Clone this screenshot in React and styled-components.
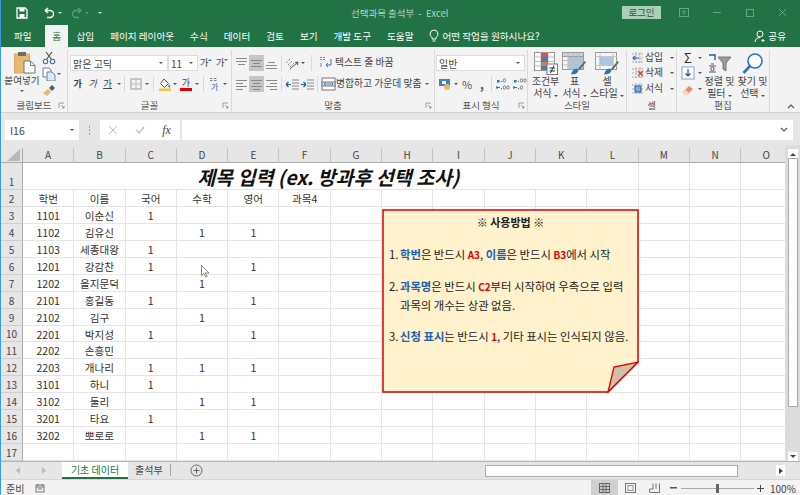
import React from 'react'
import styled, { createGlobalStyle } from 'styled-components'

const GREEN = '#217346'
const FONT = '"Noto Sans CJK KR", "Noto Sans", sans-serif'

const GlobalStyle = createGlobalStyle`
  html, body { margin: 0; padding: 0; background: #f3f3f3; }
  * { box-sizing: border-box; }
`

const Frame = styled.div`
  width: 800px;
  height: 495px;
  display: flex;
  flex-direction: column;
  overflow: hidden;
  border-left: 1px solid #3c9bdc;
  font-family: ${FONT};
  font-size: 10px;
  color: #444;
`

/* title bar */
const TitleBar = styled.div`
  height: 25px;
  flex: none;
  display: flex;
  align-items: center;
  background: ${GREEN};
`
const QuickAccess = styled.div`
  width: 350px;
  display: flex;
  align-items: center;
  padding-left: 14px;
`
const Slot = styled.span`
  width: ${p => p.$w}px;
  height: ${p => p.$h || 16}px;
  flex: none;
  display: flex;
  align-items: center;
  justify-content: center;
`
const DocTitle = styled.div`
  color: #b4d2c1;
  font-size: 9.5px;
  white-space: pre;
`
const WindowControls = styled.div`
  margin-left: auto;
  padding-right: 1px;
  display: flex;
  align-items: center;
`
const LoginButton = styled.div`
  width: 39px;
  height: 13px;
  margin-right: 6px;
  background: #a9cfb9;
  color: #1f5f3c;
  font-size: 9.5px;
  line-height: 13px;
  text-align: center;
`

/* tab row */
const TabRow = styled.div`
  height: 22px;
  flex: none;
  display: flex;
  align-items: stretch;
  padding-left: 5px;
  background: ${GREEN};
`
const Tab = styled.div`
  padding: 0 8px;
  line-height: 22px;
  color: ${p => (p.$active ? GREEN : '#fff')};
  background: ${p => (p.$active ? '#f3f3f3' : 'transparent')};
  font-size: 9.6px;
  white-space: nowrap;
  ${p => p.$active && 'margin-left: 5px; padding: 0 7.5px;'}
`
const TellMe = styled.div`
  display: flex;
  align-items: center;
  gap: 3px;
  margin-left: 8px;
  color: #fff;
  font-size: 9.6px;
`
const Share = styled.div`
  margin-left: auto;
  margin-right: 14px;
  display: flex;
  align-items: center;
  gap: 2px;
  color: #fff;
  font-size: 9.6px;
`

/* ribbon */
const Ribbon = styled.div`
  height: 66px;
  flex: none;
  display: flex;
  background: #f3f3f3;
  border-bottom: 1px solid #d2d2d2;
`
const Group = styled.section`
  width: ${p => p.$w}px;
  flex: none;
  margin-top: 3px;
  display: flex;
  flex-direction: column;
  border-right: 1px solid #dadada;
`
const GroupBody = styled.div`
  flex: 1;
  display: flex;
  flex-direction: ${p => (p.$row ? 'row' : 'column')};
  padding: ${p => p.$pad || '5px 0 0 2px'};
  min-height: 0;
`
const GroupFoot = styled.div`
  height: 13px;
  flex: none;
  display: grid;
  grid-template-columns: 12px 1fr 12px;
  align-items: center;
  text-align: center;
  color: #555;
  font-size: 9.5px;
  line-height: 13px;
`
const ToolRow = styled.div`
  display: flex;
  align-items: center;
  height: ${p => p.$h || 16}px;
  margin-top: ${p => p.$mt || 0}px;
`
const Tool = styled.span`
  width: ${p => p.$w || 15}px;
  height: 16px;
  flex: none;
  display: flex;
  align-items: center;
  justify-content: center;
  background: ${p => (p.$active ? '#c6c6c6' : 'transparent')};
  color: #444;
`
const Glyph = styled.span`
  font-size: ${p => p.$size || 9.5}px;
  font-family: ${p => (p.$serif ? '"Liberation Serif", serif' : 'inherit')};
  font-weight: ${p => (p.$bold ? 700 : 400)};
  font-style: ${p => (p.$italic ? 'italic' : 'normal')};
  text-decoration: ${p => (p.$under ? 'underline' : 'none')};
  color: ${p => p.$color || '#444'};
  line-height: 1;
`
const Divider = styled.span`
  width: 1px;
  height: 16px;
  flex: none;
  background: #dadada;
  margin: 0 ${p => p.$m || 3}px;
`
const Caret = styled.i`
  display: inline-block;
  flex: none;
  width: 0;
  height: 0;
  margin: ${p => p.$m || '0'};
  border-left: 2px solid transparent;
  border-right: 2px solid transparent;
  border-top: 2.5px solid ${p => p.$color || '#555'};
`
const Combo = styled.div`
  width: ${p => p.$w}px;
  height: 16px;
  flex: none;
  display: flex;
  align-items: center;
  justify-content: space-between;
  padding: 0 4px 0 2px;
  background: #fff;
  border: 1px solid #dcdcdc;
  color: #444;
  font-size: 10px;
`
const Label = styled.span`
  color: #444;
  font-size: 9.8px;
  white-space: nowrap;
  line-height: 1;
`
const PasteButton = styled.div`
  width: 40px;
  flex: none;
  display: flex;
  flex-direction: column;
  align-items: center;
`
const PasteArt = styled.div`
  height: 23px;
  margin: 1px 0 0 5px;
  line-height: 0;
`
const PasteText = styled.div`
  font-size: 9.6px;
  line-height: 12px;
  white-space: nowrap;
`
const SideTools = styled.div`
  width: ${p => (p.$w ? `${p.$w}px` : 'auto')};
  flex: none;
  display: flex;
  flex-direction: column;
`
const BigButton = styled.div`
  width: ${p => p.$w}px;
  flex: none;
  padding-top: ${p => p.$top || 0}px;
  display: flex;
  flex-direction: column;
  align-items: center;
  font-size: 10px;
  line-height: 12px;
  color: #444;
  white-space: nowrap;
`
const BigIcon = styled.div`
  height: 24px;
  display: flex;
  align-items: center;
  justify-content: center;
`
const CollapseButton = styled.div`
  margin-left: auto;
  margin-right: 5px;
  align-self: flex-end;
  padding-bottom: 3px;
  line-height: 0;
`

/* formula bar */
const FormulaBar = styled.div`
  height: 32px;
  flex: none;
  display: flex;
  align-items: flex-start;
  padding: 7px 7px 0 4px;
  background: #e6e6e6;
`
const NameBox = styled.div`
  width: 74px;
  height: 20px;
  display: flex;
  align-items: center;
  justify-content: space-between;
  padding: 0 5px;
  background: #fff;
  font-size: 10.5px;
  color: #444;
`
const Dots = styled.div`
  width: 21px;
  height: 20px;
  display: flex;
  align-items: center;
  justify-content: center;
`
const FormulaButtons = styled.div`
  width: 80px;
  height: 20px;
  display: flex;
  align-items: center;
  background: #fff;
  margin-right: 2px;
`
const FormulaInput = styled.div`
  flex: 1;
  height: 20px;
  display: flex;
  align-items: center;
  justify-content: flex-end;
  padding-right: 5px;
  background: #fff;
`

/* sheet */
const SheetArea = styled.div`
  height: 316px;
  flex: none;
  display: flex;
  background: #e6e6e6;
  position: relative;
`
const SheetClip = styled.div`
  width: 784px;
  flex: none;
  overflow: hidden;
  padding-top: 3px;
`
const SheetGrid = styled.div`
  display: grid;
  width: 792px;
  grid-template-columns: 22px repeat(15, 51.3px);
  grid-template-rows: 15px 27px repeat(16, 16.94px);
  background: #fff;
`
const Corner = styled.div`
  background: #e6e6e6;
  border-bottom: 1px solid #ababab;
  border-right: 1px solid #ababab;
  display: flex;
  align-items: flex-end;
  justify-content: flex-end;
  padding: 0 2px 1px 0;
`
const ColHead = styled.div`
  background: #e6e6e6;
  border-bottom: 1px solid #ababab;
  border-right: 1px solid #c4c4c4;
  color: #444;
  font-size: 10px;
  line-height: 14px;
  text-align: center;
`
const RowHead = styled.div`
  background: #e6e6e6;
  border-right: 1px solid #ababab;
  border-bottom: 1px solid #cfcfcf;
  color: #444;
  font-size: 10px;
  display: flex;
  align-items: flex-end;
  justify-content: center;
  line-height: 15px;
`
const Cell = styled.div`
  border-right: 1px solid #e5e5e5;
  border-bottom: 1px solid #e5e5e5;
  color: #333;
  font-size: 10.6px;
  line-height: 17px;
  text-align: center;
  white-space: nowrap;
  overflow: hidden;
`
const TitleCell = styled.div`
  grid-column: span 12;
  padding-right: 4px;
  border-right: 1px solid #e5e5e5;
  border-bottom: 1px solid #e5e5e5;
  color: #111;
  font-size: 19.5px;
  font-weight: 700;
  font-style: italic;
  line-height: 27px;
  text-align: center;
  white-space: nowrap;
`
const Scrollbar = styled.div`
  width: 15px;
  flex: none;
  display: flex;
  flex-direction: column;
  align-items: center;
  padding-top: 4px;
  background: #dcdcdc;
`
const ScrollButton = styled.div`
  width: 10px;
  height: 9px;
  flex: none;
  background: #fff;
  display: flex;
  align-items: center;
  justify-content: center;
  margin-top: ${p => p.$mt || 0}px;
`
const ScrollThumb = styled.div`
  width: 10px;
  height: 249px;
  flex: none;
  background: #fff;
  border: 1px solid #ababab;
`
const CursorMark = styled.svg`
  position: absolute;
  left: 200px;
  top: 120px;
`

/* sticky note, lies over the sheet */
const Note = styled.div`
  position: absolute;
  left: 381px;
  top: 64px;
  width: 257px;
  height: 184px;
  padding: 4px 0 0 7px;
  color: #222;
  font-size: 11.35px;
  line-height: 18px;
`
const NoteShape = styled.svg`
  position: absolute;
  inset: 0;
`
const NoteContent = styled.div`
  position: relative;
  white-space: nowrap;
`
const NoteTitle = styled.div`
  font-weight: 700;
  font-size: 11px;
  text-align: center;
  padding-right: 7px;
  margin-bottom: 14px;
`
const NoteItem = styled.div`
  display: flex;
  margin-bottom: 13px;
`
const NoteNum = styled.span`
  width: 11px;
  flex: none;
`
const Blue = styled.b`
  color: #1d5fb0;
`
const Red = styled.b`
  color: #e00000;
  font-size: 10px;
`

/* sheet tabs */
const TabStrip = styled.div`
  height: 18px;
  flex: none;
  display: flex;
  align-items: stretch;
  background: #e6e6e6;
  border-top: 1px solid #b5b5b5;
`
const SheetNav = styled.div`
  width: 61px;
  display: flex;
  align-items: center;
  padding-left: 15px;
  gap: 8px;
`
const ActiveSheetTab = styled.div`
  width: 66px;
  text-align: center;
  line-height: 15px;
  font-size: 10px;
  color: ${GREEN};
  background: #fff;
  border-bottom: 2px solid ${GREEN};
`
const SheetTab = styled.div`
  width: 37px;
  margin: 2px 0 3px 6px;
  padding-left: 1px;
  line-height: 12px;
  font-size: 10px;
  color: #444;
  border-right: 1px solid #aaa;
`
const AddSheet = styled.div`
  margin-left: 19px;
  display: flex;
  align-items: center;
`
const HScroll = styled.div`
  margin-left: 282px;
  flex: 1;
  display: flex;
  align-items: center;
  padding-right: 15px;
`
const HThumb = styled.div`
  width: 253px;
  height: 12px;
  background: #fff;
  border: 1px solid #ababab;
`
const HButton = styled.div`
  width: 9px;
  height: 11px;
  margin-left: auto;
  background: #fff;
  display: flex;
  align-items: center;
  justify-content: center;
`

/* status bar */
const StatusBar = styled.div`
  flex: 1;
  display: flex;
  align-items: center;
  padding-left: 5px;
  background: #f3f3f3;
  border-top: 1px solid #d6d6d6;
  font-size: 10px;
  color: #444;
`
const MacroSlot = styled.span`
  margin-left: 7px;
  width: 18px;
  display: flex;
  justify-content: center;
`
const StatusRight = styled.div`
  margin-left: auto;
  display: flex;
  align-items: center;
  height: 100%;
`
const ViewButton = styled.div`
  width: ${p => p.$w || 24}px;
  height: 100%;
  display: flex;
  align-items: center;
  justify-content: center;
  background: ${p => (p.$active ? '#cfcfcf' : 'transparent')};
`
const ZoomTrack = styled.div`
  width: 73px;
  height: 1px;
  margin: 0 1px;
  background: #aaa;
  display: flex;
  align-items: center;
  justify-content: center;
`
const ZoomThumb = styled.span`
  width: 3px;
  height: 9px;
  flex: none;
  background: #666;
`
const ZoomPct = styled.div`
  width: 34px;
  padding-left: 4px;
  font-size: 10px;
`

/* drawings */
const Ico = ({ w = 14, h = 14, vb, children }) => (
  <svg width={w} height={h} viewBox={vb || `0 0 ${w} ${h}`} fill="none">{children}</svg>
)

const Lines = ({ kind }) => {
  // alignment glyphs: top / middle / bottom and left / center / right
  const rows = {
    top: [[1, 2, 11], [1, 5, 11], [3, 8, 7]],
    middle: [[1, 4, 11], [3, 7, 7], [1, 10, 11]],
    bottom: [[3, 6, 7], [1, 9, 11], [1, 12, 11]],
    left: [[1, 3, 11], [1, 6, 7], [1, 9, 11], [1, 12, 7]],
    center: [[1, 3, 11], [3, 6, 7], [1, 9, 11], [3, 12, 7]],
    right: [[1, 3, 11], [5, 6, 7], [1, 9, 11], [5, 12, 7]],
  }[kind]
  return (
    <Ico w={13} h={14}>
      {rows.map(([x, y, l]) => <rect key={y} x={x} y={y} width={l} height="1" fill="#8a8a8a" />)}
    </Ico>
  )
}

const PasteIcon = () => (
  <Ico w={22} h={23}>
    <rect x="0.500" y="3" width="15" height="19" fill="#e7b873" stroke="#dcaa62" />
    <rect x="4" y="1" width="8" height="4" fill="#6b6b6b" />
    <path d="M10 10h6.500l4.500 4.500V22H10z" fill="#fff" stroke="#777" />
    <path d="M16.500 10v4.500H21" stroke="#777" />
  </Ico>
)
const CutIcon = () => (
  <Ico>
    <path d="M4 1l6 8M10 1L4 9" stroke="#4b4b4b" strokeWidth="1.100" />
    <circle cx="3.500" cy="10.500" r="2.200" stroke="#2f74b5" strokeWidth="1.100" />
    <circle cx="10.500" cy="10.500" r="2.200" stroke="#2f74b5" strokeWidth="1.100" />
  </Ico>
)
const CopyIcon = () => (
  <Ico>
    <path d="M1 1h6l2 2v7H1z" fill="#fff" stroke="#7a7a7a" />
    <path d="M5 5h5l3 3v6H5z" fill="#dce9f5" stroke="#5c86ad" />
  </Ico>
)
const PainterIcon = () => (
  <Ico>
    <path d="M1 10l5-4 3 3-4 4z" fill="#e7b873" />
    <path d="M7 5l3-3 3 3-3 3z" fill="#5a5a5a" />
  </Ico>
)
const SizeStep = ({ up }) => (
  <Ico w={5} h={10}>
    <path d={up ? 'M0 3l2-2 2 2z' : 'M0 1l2 2 2-2z'} fill="#2f74b5" />
  </Ico>
)
const BorderIcon = () => (
  <Ico w={12} h={12}>
    <rect x="1" y="1" width="10" height="10" stroke="#999" />
    <path d="M6 1v10M1 6h10" stroke="#bbb" />
  </Ico>
)
const FillIcon = () => (
  <Ico w={14} h={15}>
    <path d="M6 2l4.500 4.500L6.500 10.500 2.500 6.500z" fill="#fff" stroke="#555" />
    <path d="M11 7c1 1.500 1.500 2.200 1 3s-1.600.6-1.800-.2z" fill="#3a78b8" />
    <rect x="1" y="11.500" width="12" height="2.500" fill="#f3c63d" />
  </Ico>
)
const FontColorIcon = () => (
  <Ico w={14} h={15}>
    <text x="7" y="9" textAnchor="middle" fontSize="9" fill="#444" fontFamily={FONT}>가</text>
    <rect x="1" y="11" width="12" height="3" fill="#e00000" />
  </Ico>
)
const CurrencyIcon = () => (
  <Ico>
    <rect x="1" y="2" width="11" height="7" fill="#3c82c4" />
    <rect x="4" y="4" width="4" height="3" fill="#fff" />
    <circle cx="9" cy="10" r="3" fill="#eab866" />
  </Ico>
)
const Zeros = ({ y, n }) => (
  <>
    <rect x="5" y={y + 2} width="1" height="1" fill="#555" />
    {Array.from({ length: n }, (_, i) => (
      <ellipse key={i} cx={8.500 + i * 3.500} cy={y + 1.500} rx="1.200" ry="1.700" stroke="#555" strokeWidth=".7" />
    ))}
  </>
)
const DecimalIcon = ({ flip }) => (
  <Ico w={15} h={14}>
    <Zeros y={2} n={flip ? 2 : 1} />
    <Zeros y={9} n={flip ? 1 : 2} />
    <path d="M0 10.500h4M0 10.500l1.500-1.500M0 10.500l1.500 1.500" stroke="#2f74b5" />
    <rect x="1" y="3" width="2.500" height="2.500" fill="#2f74b5" />
  </Ico>
)
const WrapIcon = () => (
  <Ico>
    <path d="M1 1.500h2M1 3.500h2M4 1.500h2M4 3.500h2M1 8h2M1 10h2" stroke="#666" strokeWidth=".8" />
    <path d="M12 3v6H7M7 9l2-2M7 9l2 2" stroke="#2f74b5" />
  </Ico>
)
const MergeIcon = () => (
  <Ico w={15} h={14}>
    <rect x="1" y="1" width="13" height="12" fill="#fff" stroke="#777" />
    <rect x="1" y="5" width="13" height="4" fill="#d6e6f5" stroke="#777" />
    <path d="M3 7h9M3 7l1.500-1.500M3 7l1.500 1.500M12 7l-1.500-1.500M12 7l-1.500 1.500" stroke="#2f74b5" strokeWidth=".8" />
  </Ico>
)
const OrientIcon = () => (
  <Ico>
    <path d="M1 7l4-4M3 9l4-4M5 11l4-4" stroke="#777" strokeWidth=".9" strokeDasharray="1.500 .7" />
    <path d="M5 13l8-7M13 6l-3 .5M13 6l-.5 3" stroke="#555" />
  </Ico>
)
const IndentIcon = ({ flip }) => (
  <Ico w={15} h={14}>
    <path d="M7 3h7M7 6h7M7 9h7M7 12h7" stroke="#8a8a8a" />
    {flip
      ? <path d="M1 7.500h5M6 7.500L3.500 5M6 7.500L3.500 10" stroke="#1f5fa8" strokeWidth="1.200" />
      : <path d="M6 7.500H1M1 7.500L3.500 5M1 7.500L3.500 10" stroke="#1f5fa8" strokeWidth="1.200" />}
  </Ico>
)
const PhoneticIcon = () => (
  <Ico>
    <path d="M2 1.500h2.500M2 3.500h2.500M6 1.500h2.500M6 3.500h2.500" stroke="#666" strokeWidth=".8" />
    <text x="3" y="13" fontSize="8" fill="#2f74b5" fontFamily={FONT}>가</text>
  </Ico>
)
const CondIcon = () => (
  <Ico w={24} h={23}>
    <rect x="0.500" y="0.500" width="20" height="18" fill="#fff" stroke="#999" />
    <path d="M7 .5v18M14 .5v18M.5 5h20M.5 9.500h20M.5 14h20" stroke="#bbb" />
    <rect x="7" y="1" width="7" height="4" fill="#d9534f" />
    <rect x="7" y="5" width="7" height="5" fill="#3f7fbf" />
    <rect x="7" y="10" width="7" height="4" fill="#e07b39" />
    <rect x="7" y="14" width="7" height="4" fill="#3f7fbf" />
    <rect x="13" y="12" width="10.500" height="10.500" fill="#fff" stroke="#777" />
    <path d="M15.500 16h5.500M15.500 19h5.500M16.500 21l3.500-7.500" stroke="#333" />
  </Ico>
)
const TableIcon = () => (
  <Ico w={25} h={23}>
    <rect x="0.500" y="0.500" width="21" height="17" fill="#f6f6f6" stroke="#999" />
    <rect x="0.500" y="0.500" width="21" height="4" fill="#cfcfcf" stroke="#999" />
    <rect x="6" y="5" width="15" height="12" fill="#a7c7e4" />
    <path d="M6 .5v17M11 .5v17M16 .5v17M.5 8.500h21M.5 13h21" stroke="#bdbdbd" />
    <path d="M9 22.500c1-4 3-6 6-6l1.500 2c-1 3-3.500 4-7.500 4z" fill="#2f74b5" />
    <path d="M16 17l6.500-8 1.500 1.200-6.500 8z" fill="#666" />
  </Ico>
)
const CellStyleIcon = () => (
  <Ico w={25} h={23}>
    <rect x="0.500" y="0.500" width="21" height="17" fill="#f6f6f6" stroke="#999" />
    <rect x="5" y="4.500" width="13" height="9" fill="#a7c7e4" stroke="#8fb0cd" />
    <path d="M5 .5v17M18 .5v17M.5 4.500h21M.5 13.500h21" stroke="#c6c6c6" />
    <path d="M9 22.500c1-4 3-6 6-6l1.500 2c-1 3-3.500 4-7.500 4z" fill="#2f74b5" />
    <path d="M16 17l6.500-8 1.500 1.200-6.500 8z" fill="#666" />
  </Ico>
)
const InsertIcon = ({ kind }) => (
  <Ico w={14} h={14}>
    <path d="M1 3h12M1 7h12M1 11h12M5 1v12M9 1v12" stroke="#aaa" strokeDasharray="2 1" />
    {kind === 'insert' && <path d="M2 7h6M2 7l2-2M2 7l2 2" stroke="#2f74b5" strokeWidth="1.200" />}
    {kind === 'delete' && <path d="M7 5l5 5M12 5l-5 5" stroke="#d8432c" strokeWidth="1.400" />}
    {kind === 'format' && <rect x="4" y="4" width="6" height="6" fill="#7fa9d1" stroke="#1f5fa8" />}
  </Ico>
)
const FillDownIcon = () => (
  <Ico>
    <rect x="1" y="1" width="12" height="12" fill="#fff" stroke="#8aa5bf" />
    <path d="M7 3v7M7 10L4.500 7.500M7 10l2.500-2.500" stroke="#1f5fa8" strokeWidth="1.300" />
  </Ico>
)
const EraserIcon = () => (
  <Ico>
    <path d="M2 10l6-6 4 3-6 6H4z" fill="#ee8a70" />
    <path d="M2 10l2 3h2l2-2-3-3z" fill="#f9d3c8" />
  </Ico>
)
const SortIcon = () => (
  <Ico w={24} h={23}>
    <path d="M1 3h6v5" stroke="#1f5fa8" strokeWidth="1.400" />
    <path d="M3 12h3M1 14h7M1 20h7" stroke="#555" />
    <circle cx="4.500" cy="17" r="1.700" stroke="#555" />
    <path d="M10 5h13l-5 6v8l-3-2v-6z" fill="#9a9a9a" stroke="#777" />
  </Ico>
)
const FindIcon = () => (
  <Ico w={22} h={23}>
    <circle cx="13" cy="9" r="7" stroke="#2f74b5" strokeWidth="1.600" fill="#fff" />
    <path d="M8 14l-6.500 7" stroke="#2f74b5" strokeWidth="2.600" />
  </Ico>
)
const LaunchIcon = () => (
  <Ico w={7} h={7}>
    <path d="M1 6V1h5" stroke="#888" strokeWidth=".8" />
    <path d="M3 3l3 3M6 4v2H4" stroke="#888" strokeWidth=".8" />
  </Ico>
)

const Foot = ({ children, launcher }) => (
  <GroupFoot>
    <span />
    <span>{children}</span>
    {launcher ? <Slot $w={12} $h={13}><LaunchIcon /></Slot> : <span />}
  </GroupFoot>
)

const COLUMNS = 'ABCDEFGHIJKLMNO'.split('')
const HEADINGS = ['학번', '이름', '국어', '수학', '영어', '과목4']
const STUDENTS = [
  ['1101', '이순신', '1', '', ''],
  ['1102', '김유신', '', '1', '1'],
  ['1103', '세종대왕', '1', '', ''],
  ['1201', '강감찬', '1', '', '1'],
  ['1202', '을지문덕', '', '1', ''],
  ['2101', '홍길동', '1', '', '1'],
  ['2102', '김구', '', '1', ''],
  ['2201', '박지성', '1', '', '1'],
  ['2202', '손흥민', '', '', ''],
  ['2203', '개나리', '1', '1', '1'],
  ['3101', '하니', '1', '', ''],
  ['3102', '둘리', '', '1', '1'],
  ['3201', '타요', '1', '', ''],
  ['3202', '뽀로로', '', '1', '1'],
  ['', '', '', '', ''],
]
const TABS = ['파일', '홈', '삽입', '페이지 레이아웃', '수식', '데이터', '검토', '보기', '개발 도구', '도움말']

const SheetRow = ({ num, values }) => (
  <>
    <RowHead>{num}</RowHead>
    {COLUMNS.map((c, i) => <Cell key={c}>{values[i]}</Cell>)}
  </>
)

export default function App() {
  return (
    <Frame>
      <GlobalStyle />
      <TitleBar>
        <QuickAccess>
          <Slot $w={14}>
            <Ico w={12} h={12}>
              <path d="M1 1h8l2 2v8H1z" stroke="#fff" strokeWidth="1.300" />
              <rect x="3.500" y="1" width="5" height="3.500" fill="#fff" />
              <rect x="3.500" y="7" width="5" height="4" fill="#fff" />
            </Ico>
          </Slot>
          <Slot $w={14} />
          <Slot $w={14}>
            <Ico w={14} h={12}>
              <path d="M4 3h5a3.500 3.500 0 0 1 0 7H6M4 3l3-2.500M4 3l3 2.500" stroke="#fff" strokeWidth="1.400" transform="translate(-2 .5)" />
            </Ico>
          </Slot>
          <Slot $w={5}><Caret $color="#cfe3d7" /></Slot>
          <Slot $w={8} />
          <Slot $w={14}>
            <Ico w={14} h={12}>
              <path d="M10 3H5a3.500 3.500 0 0 0 0 7h3M10 3L7 .5M10 3L7 5.500" stroke="#5f9c7b" strokeWidth="1.400" transform="translate(1 .5)" />
            </Ico>
          </Slot>
          <Slot $w={5}><Caret $color="#5f9c7b" /></Slot>
          <Slot $w={8} />
          <Slot $w={5}><Caret $color="#cfe3d7" /></Slot>
        </QuickAccess>
        <DocTitle>선택과목 출석부  -  Excel</DocTitle>
        <WindowControls>
          <LoginButton>로그인</LoginButton>
          <Slot $w={33}>
            <Ico w={10} h={9}>
              <rect x=".5" y=".5" width="9" height="8" stroke="#6aa585" />
              <path d="M5 7V3M3 4.500L5 2.500l2 2" stroke="#6aa585" />
            </Ico>
          </Slot>
          <Slot $w={33}><Ico w={8} h={2}><rect width="8" height="1" fill="#6aa585" /></Ico></Slot>
          <Slot $w={33}><Ico w={8} h={8}><rect x=".5" y=".5" width="7" height="7" stroke="#6aa585" /></Ico></Slot>
          <Slot $w={33}><Ico w={9} h={9}><path d="M1 1l7 7M8 1L1 8" stroke="#6aa585" /></Ico></Slot>
        </WindowControls>
      </TitleBar>

      <TabRow>
        {TABS.map((t, i) => <Tab key={t} $active={i === 1}>{t}</Tab>)}
        <TellMe>
          <Ico w={10} h={14}>
            <path d="M5 1a4 4 0 0 1 2 7.400V10H3V8.400A4 4 0 0 1 5 1zM3.500 12h3" stroke="#fff" />
          </Ico>
          어떤 작업을 원하시나요?
        </TellMe>
        <Share>
          <Ico w={12} h={13}>
            <circle cx="6" cy="4" r="3" stroke="#fff" />
            <path d="M1 12c.5-3 2-4.500 5-4.500M9 9v3M7.500 10.500h3" stroke="#fff" />
          </Ico>
          공유
        </Share>
      </TabRow>

      <Ribbon>
        <Group $w={67}>
          <GroupBody $row $pad="0 0 0 1px">
            <PasteButton>
              <PasteArt><PasteIcon /></PasteArt>
              <PasteText>붙여넣기</PasteText>
              <Slot $w={8} $h={9}><Caret /></Slot>
            </PasteButton>
            <SideTools>
              <ToolRow><Tool $w={14}><CutIcon /></Tool></ToolRow>
              <ToolRow><Tool $w={14}><CopyIcon /></Tool><Caret $m="0 0 0 1px" /></ToolRow>
              <ToolRow><Tool $w={14}><PainterIcon /></Tool></ToolRow>
            </SideTools>
          </GroupBody>
          <Foot launcher>클립보드</Foot>
        </Group>

        <Group $w={164}>
          <GroupBody>
            <ToolRow>
              <Combo $w={98}>맑은 고딕<Caret /></Combo>
              <Combo $w={30}>11<Caret /></Combo>
              <Tool $w={17}><Glyph>가</Glyph><SizeStep up /></Tool>
              <Tool $w={15}><Glyph>가</Glyph><SizeStep /></Tool>
            </ToolRow>
            <ToolRow $mt={5}>
              <Tool><Glyph $bold>가</Glyph></Tool>
              <Tool><Glyph $italic>가</Glyph></Tool>
              <Tool><Glyph $under>가</Glyph></Tool>
              <Tool $w={7}><Caret /></Tool>
              <Divider $m={2} />
              <Tool $w={17}><BorderIcon /></Tool>
              <Tool $w={6}><Caret /></Tool>
              <Divider $m={3} />
              <Tool $w={15}><FillIcon /></Tool>
              <Tool $w={6}><Caret /></Tool>
              <Tool $w={15}><FontColorIcon /></Tool>
              <Tool $w={7}><Caret /></Tool>
              <Divider $m={3} />
              <Tool $w={15}><PhoneticIcon /></Tool>
              <Tool $w={6}><Caret /></Tool>
            </ToolRow>
          </GroupBody>
          <Foot launcher>글꼴</Foot>
        </Group>

        <Group $w={203}>
          <GroupBody>
            <ToolRow>
              <Tool><Lines kind="top" /></Tool>
              <Tool $active><Lines kind="middle" /></Tool>
              <Tool><Lines kind="bottom" /></Tool>
              <Divider $m={2} />
              <Tool $w={15}><OrientIcon /></Tool>
              <Tool $w={7}><Caret /></Tool>
              <Divider $m={5} />
              <Tool $w={18}><WrapIcon /></Tool>
              <Label>텍스트 줄 바꿈</Label>
            </ToolRow>
            <ToolRow $mt={5}>
              <Tool><Lines kind="left" /></Tool>
              <Tool $active><Lines kind="center" /></Tool>
              <Tool><Lines kind="right" /></Tool>
              <Divider $m={2} />
              <Tool $w={16}><IndentIcon /></Tool>
              <Tool $w={15}><IndentIcon flip /></Tool>
              <Divider $m={2} />
              <Tool $w={16}><MergeIcon /></Tool>
              <Label>병합하고 가운데 맞춤</Label>
              <Caret $m="0 0 0 3px" />
            </ToolRow>
          </GroupBody>
          <Foot launcher>맞춤</Foot>
        </Group>

        <Group $w={93}>
          <GroupBody $pad="5px 0 0 1px">
            <ToolRow><Combo $w={89}>일반<Caret /></Combo></ToolRow>
            <ToolRow $mt={5}>
              <Tool $w={17}><CurrencyIcon /></Tool>
              <Tool $w={6}><Caret /></Tool>
              <Tool $w={16}><Glyph $color="#555" $size={11}>%</Glyph></Tool>
              <Tool $w={14}><Glyph $bold $color="#555" $size={12}>,</Glyph></Tool>
              <Divider $m={2} />
              <Tool $w={18}><DecimalIcon /></Tool>
              <Tool $w={17}><DecimalIcon flip /></Tool>
            </ToolRow>
          </GroupBody>
          <Foot launcher>표시 형식</Foot>
        </Group>

        <Group $w={99}>
          <GroupBody $row $pad="1px 0 0 2px">
            <BigButton $w={31}>
              <BigIcon><CondIcon /></BigIcon>
              <span>조건부</span>
              <span>서식 <Caret /></span>
            </BigButton>
            <BigButton $w={27}>
              <BigIcon><TableIcon /></BigIcon>
              <span>표</span>
              <span>서식 <Caret /></span>
            </BigButton>
            <BigButton $w={38}>
              <BigIcon><CellStyleIcon /></BigIcon>
              <span>셀</span>
              <span>스타일 <Caret /></span>
            </BigButton>
          </GroupBody>
          <Foot>스타일</Foot>
        </Group>

        <Group $w={50}>
          <GroupBody $pad="0 0 0 3px">
            <ToolRow $h={15.500}><Tool $w={15}><InsertIcon kind="insert" /></Tool><Label>삽입</Label><Caret $m="0 0 0 7px" /></ToolRow>
            <ToolRow $h={15.500}><Tool $w={15}><InsertIcon kind="delete" /></Tool><Label>삭제</Label><Caret $m="0 0 0 7px" /></ToolRow>
            <ToolRow $h={15.500}><Tool $w={15}><InsertIcon kind="format" /></Tool><Label>서식</Label><Caret $m="0 0 0 7px" /></ToolRow>
          </GroupBody>
          <Foot>셀</Foot>
        </Group>

        <Group $w={93}>
          <GroupBody $row $pad="0 0 0 2px">
            <SideTools $w={24}>
              <ToolRow $h={15.500}><Tool $w={18}><Glyph $color="#333" $size={13}>Σ</Glyph></Tool><Caret $m="0 0 0 1px" /></ToolRow>
              <ToolRow $h={15.500}><Tool $w={18}><FillDownIcon /></Tool><Caret $m="0 0 0 1px" /></ToolRow>
              <ToolRow $h={15.500}><Tool $w={18}><EraserIcon /></Tool><Caret $m="0 0 0 1px" /></ToolRow>
            </SideTools>
            <BigButton $w={33} $top={1}>
              <BigIcon><SortIcon /></BigIcon>
              <span>정렬 및</span>
              <span>필터 <Caret /></span>
            </BigButton>
            <BigButton $w={33} $top={1}>
              <BigIcon><FindIcon /></BigIcon>
              <span>찾기 및</span>
              <span>선택 <Caret /></span>
            </BigButton>
          </GroupBody>
          <Foot>편집</Foot>
        </Group>

        <CollapseButton>
          <Ico w={8} h={6}><path d="M1 5l3-3 3 3" stroke="#555" strokeWidth="1.100" /></Ico>
        </CollapseButton>
      </Ribbon>

      <FormulaBar>
        <NameBox>I16<Caret /></NameBox>
        <Dots>
          <Ico w={3} h={10}><path d="M1.500 1v1.500M1.500 4.500V6M1.500 8v1.500" stroke="#888" /></Ico>
        </Dots>
        <FormulaButtons>
          <Slot $w={26}><Ico w={10} h={10}><path d="M1 1l8 8M9 1L1 9" stroke="#bbb" /></Ico></Slot>
          <Slot $w={27}><Ico w={10} h={10}><path d="M1 5l3 3 5-6" stroke="#bbb" strokeWidth="1.200" /></Ico></Slot>
          <Slot $w={27}><Glyph $italic $serif $size={12}>fx</Glyph></Slot>
        </FormulaButtons>
        <FormulaInput>
          <Ico w={8} h={6}><path d="M1 1l3 3 3-3" stroke="#555" strokeWidth="1.100" /></Ico>
        </FormulaInput>
      </FormulaBar>

      <SheetArea>
        <SheetClip>
          <SheetGrid>
            <Corner>
              <Ico w={13} h={12}><path d="M13 0v12H0z" fill="#b8b8b8" /></Ico>
            </Corner>
            {COLUMNS.map(c => <ColHead key={c}>{c}</ColHead>)}
            <RowHead>1</RowHead>
            <TitleCell>제목 입력 (ex. 방과후 선택 조사)</TitleCell>
            <Cell /><Cell /><Cell />
            <SheetRow num={2} values={HEADINGS} />
            {STUDENTS.map((s, i) => <SheetRow key={i} num={i + 3} values={s} />)}
          </SheetGrid>
        </SheetClip>
        <Scrollbar>
          <ScrollButton><Ico w={6} h={4}><path d="M0 4l3-3 3 3z" fill="#444" /></Ico></ScrollButton>
          <ScrollThumb />
          <ScrollButton $mt={45}><Ico w={6} h={4}><path d="M0 0l3 3 3-3z" fill="#444" /></Ico></ScrollButton>
        </Scrollbar>
        <CursorMark width="9" height="13" viewBox="0 0 9 13">
          <path d="M.5.5v10l2.500-2 1.700 3.500 1.500-.7L4.200 8H8z" fill="#fff" stroke="#666" strokeWidth=".8" />
        </CursorMark>
        <Note>
          <NoteShape width="257" height="184" viewBox="0 0 257 184">
            <path d="M1 1h255v152l-30 30H1z" fill="#fff2cc" stroke="#e00000" strokeWidth="1.500" />
            <path d="M226 183l6-25 24-5z" fill="#cfc1a5" stroke="#e00000" strokeWidth="1.300" />
          </NoteShape>
          <NoteContent>
            <NoteTitle>※ 사용방법 ※</NoteTitle>
            <NoteItem>
              <NoteNum>1.</NoteNum>
              <span><Blue>학번</Blue>은 반드시 <Red>A3</Red>, <Blue>이름</Blue>은 반드시 <Red>B3</Red>에서 시작</span>
            </NoteItem>
            <NoteItem>
              <NoteNum>2.</NoteNum>
              <span><Blue>과목명</Blue>은 반드시 <Red>C2</Red>부터 시작하여 우측으로 입력<br />과목의 개수는 상관 없음.</span>
            </NoteItem>
            <NoteItem>
              <NoteNum>3.</NoteNum>
              <span><Blue>신청 표시</Blue>는 반드시 <Red>1</Red>, 기타 표시는 인식되지 않음.</span>
            </NoteItem>
          </NoteContent>
        </Note>
      </SheetArea>

      <TabStrip>
        <SheetNav>
          <Ico w={5} h={7}><path d="M4 0v7L0 3.500z" fill="#bbb" /></Ico>
          <Slot $w={4} />
          <Ico w={5} h={7}><path d="M1 0v7l4-3.500z" fill="#bbb" /></Ico>
        </SheetNav>
        <ActiveSheetTab>기초 데이터</ActiveSheetTab>
        <SheetTab>출석부</SheetTab>
        <AddSheet>
          <Ico w={13} h={13}>
            <circle cx="6.500" cy="6.500" r="5.500" stroke="#666" />
            <path d="M6.500 3.500v6M3.500 6.500h6" stroke="#666" />
          </Ico>
        </AddSheet>
        <HScroll>
          <HThumb />
          <HButton><Ico w={4} h={6}><path d="M0 0v6l4-3z" fill="#444" /></Ico></HButton>
        </HScroll>
      </TabStrip>

      <StatusBar>
        <span>준비</span>
        <MacroSlot>
          <Ico w={10} h={10}>
            <rect x="1" y="2" width="8" height="7" stroke="#777" />
            <path d="M1 4h8M3 1v2M7 1v2M3 6h4" stroke="#777" />
          </Ico>
        </MacroSlot>
        <StatusRight>
          <ViewButton $active $w={27}>
            <Ico w={11} h={10}>
              <rect x=".5" y=".5" width="10" height="9" stroke="#666" />
              <path d="M4 .5v9M7 .5v9M.5 3.500h10M.5 6.500h10" stroke="#666" />
            </Ico>
          </ViewButton>
          <ViewButton $w={24}>
            <Ico w={11} h={10}>
              <rect x=".5" y=".5" width="10" height="9" stroke="#777" />
              <rect x="3" y="2.500" width="5" height="5" stroke="#999" />
            </Ico>
          </ViewButton>
          <ViewButton $w={24}>
            <Ico w={11} h={10}>
              <path d="M.5 9.500h10V.5M.5 9.500V6M4 .5V6H.5M7 .5V6" stroke="#777" />
            </Ico>
          </ViewButton>
          <Slot $w={14}><Ico w={7} h={3}><rect width="7" height="1.500" fill="#555" /></Ico></Slot>
          <ZoomTrack><ZoomThumb /></ZoomTrack>
          <Slot $w={11}><Ico w={7} h={7}><path d="M3.500 0v7M0 3.500h7" stroke="#444" /></Ico></Slot>
          <ZoomPct>100%</ZoomPct>
        </StatusRight>
      </StatusBar>
    </Frame>
  )
}
